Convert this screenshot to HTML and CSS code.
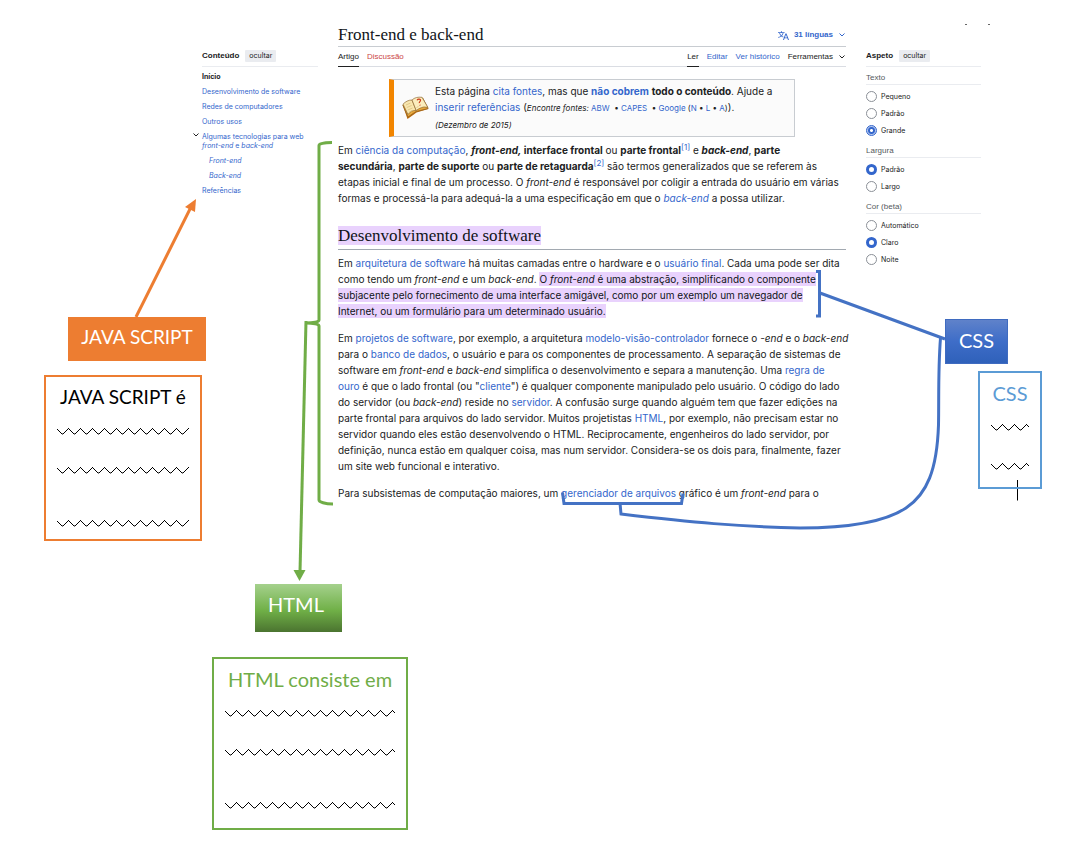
FILE: index.html
```html
<!DOCTYPE html>
<html lang="pt">
<head>
<meta charset="utf-8">
<title>Front-end e back-end</title>
<link rel="stylesheet" href="styles.css">
</head>
<body>
<div class="canvas">
  <div class="wiki">
    <nav class="toc" aria-label="Conteúdo">
      <div class="panel-head"><strong>Conteúdo</strong><button type="button">ocultar</button></div>
      <ul>
        <li><a class="current" href="#inicio">Início</a></li>
        <li><a href="#desenvolvimento">Desenvolvimento de software</a></li>
        <li><a href="#redes">Redes de computadores</a></li>
        <li><a href="#outros">Outros usos</a></li>
        <li class="expandable">
          <svg class="toggle" viewBox="0 0 8 6" aria-hidden="true"><path d="M1.5 1.5 4 4l2.500-2.500"/></svg>
          <a href="#tecnologias">Algumas tecnologias para web<br><i>front-end</i> e <i>back-end</i></a>
          <ul>
            <li><a href="#front"><i>Front-end</i></a></li>
            <li><a href="#back"><i>Back-end</i></a></li>
          </ul>
        </li>
        <li><a href="#ref">Referências</a></li>
      </ul>
    </nav>

    <main class="article" id="inicio">
      <header class="title-bar">
        <h1>Front-end e back-end</h1>
        <button class="languages" type="button">
          <svg class="lang-icon" viewBox="0 0 20 20" aria-hidden="true"><path d="M20 18h-1.440a.6.6 0 0 1-.4-.12.800.800 0 0 1-.23-.31L17 15h-5l-1 2.540a.8.8 0 0 1-.22.300.6.600 0 0 1-.4.140H9l4.550-11.470h1.890zm-3.530-4.310L14.890 9.500a12 12 0 0 1-.39-1.240q-.090.370-.19.690l-.190.560-1.580 4.190zm-6.300-1.580a13.400 13.400 0 0 1-2.910-1.410 11.460 11.460 0 0 0 2.810-5.370H12V4H7.310a4 4 0 0 0-.2-.560C6.870 2.790 6.600 2 6.600 2l-1.470.500s.4.890.6 1.500H0v1.330h2.150A11.230 11.230 0 0 0 5 10.700a17.200 17.200 0 0 1-5 2.100q.56.820.87 1.380a23.300 23.300 0 0 0 5.220-2.510 15.600 15.600 0 0 0 3.560 1.770zM3.630 5.330h4.910a8.100 8.100 0 0 1-2.450 4.450 9.100 9.100 0 0 1-2.460-4.450"/></svg>
          31 línguas
          <svg class="chevron" viewBox="0 0 8 6" aria-hidden="true"><path d="M1.500 1.500 4 4l2.500-2.500"/></svg>
        </button>
      </header>
      <div class="tabs">
        <nav class="tab-group" aria-label="Páginas">
          <a class="selected" href="#artigo">Artigo</a><a class="missing" href="#discussao">Discussão</a>
        </nav>
        <nav class="tab-group views" aria-label="Vistas">
          <a class="selected" href="#ler">Ler</a><a href="#editar">Editar</a><a href="#historico">Ver histórico</a>
          <button type="button">Ferramentas <svg class="chevron" viewBox="0 0 8 6" aria-hidden="true"><path d="M1.500 1.500 4 4l2.500-2.500"/></svg></button>
        </nav>
      </div>

      <aside class="notice">
        <svg class="book" viewBox="0 0 28 24" aria-hidden="true">
          <path d="M.8 9.500 5.500 23l7-5 2-1.500 11.700-3.500L20 2z" fill="#b8690c"/>
          <path d="M.8 9 6 21l6.500-4.500 1.700-1 12-3-5.500-10.500z" fill="#e8a83a" stroke="#96621f" stroke-width=".8"/>
          <path d="M1 8.200C3.500 5.500 6.500 4 10 4l4.200 10.500c-3.500-.3-6 1-8.200 4z" fill="#f8e6ae" stroke="#8f6a33" stroke-width=".7"/>
          <path d="M10 4c2.500-2.500 6-3.200 10-2.700l5.800 10c-4-.7-8 .3-11.600 3.200z" fill="#fbedbd" stroke="#8f6a33" stroke-width=".7"/>
          <path d="m4 9 4.500-2m-3.700 4.500 4.700-2m-3.700 4.500 4.700-2m-3.500 4.300 3.500-1.800M14.500 11.500l2-1m4 .3 2.500-.3" stroke="#d8bb78" stroke-width=".7"/>
          <path d="M15 4.200c1-1.700 3.700-1.400 3.500.3-.1 1.200-1.500 1.200-1.200 2.700m.6 1.500.3.700" fill="none" stroke="#cf3b1c" stroke-width="1.200"/>
        </svg>
        <div>
          Esta página <a href="#fontes">cita fontes</a>, mas que <a href="#cobrem"><b>não cobrem</b></a> <b>todo o conteúdo</b>. Ajude a<br>
          <a href="#inserir">inserir referências</a> (<small><i>Encontre fontes:</i> <a href="#abw">ABW</a> &nbsp;• <a href="#capes">CAPES</a> &nbsp;• <a href="#google">Google</a> (<a href="#n">N</a> • <a href="#l">L</a> • <a href="#a">A</a>)</small>).<br>
          <small><i>(Dezembro de 2015)</i></small>
        </div>
      </aside>

      <p>Em <a href="#cc">ciência da computação</a>, <b><i>front-end,</i> interface frontal</b> ou <b>parte frontal</b><sup><a href="#r1">[1]</a></sup> e <b><i>back-end</i></b>, <b>parte<br>
        secundária</b>, <b>parte de suporte</b> ou <b>parte de retaguarda</b><sup><a href="#r2">[2]</a></sup> são termos generalizados que se referem às<br>
        etapas inicial e final de um processo. O <i>front-end</i> é responsável por coligir a entrada do usuário em várias<br>
        formas e processá-la para adequá-la a uma especificação em que o <a href="#be"><i>back-end</i></a> a possa utilizar.</p>

      <h2 id="desenvolvimento"><mark>Desenvolvimento de software</mark></h2>

      <p>Em <a href="#arq">arquitetura de software</a> há muitas camadas entre o hardware e o <a href="#uf">usuário final</a>. Cada uma pode ser dita<br>
        como tendo um <i>front-end</i> e um <i>back-end</i>. <mark>O <i>front-end</i> é uma abstração, simplificando o componente<br>
        subjacente pelo fornecimento de uma interface amigável, como por um exemplo um navegador de<br>
        Internet, ou um formulário para um determinado usuário.</mark></p>

      <p>Em <a href="#proj">projetos de software</a>, por exemplo, a arquitetura <a href="#mvc">modelo-visão-controlador</a> fornece o <i>-end</i> e o <i>back-end</i><br>
        para o <a href="#bd">banco de dados</a>, o usuário e para os componentes de processamento. A separação de sistemas de<br>
        software em <i>front-end</i> e <i>back-end</i> simplifica o desenvolvimento e separa a manutenção. Uma <a href="#regra">regra de<br>
        ouro</a> é que o lado frontal (ou "<a href="#cliente">cliente</a>") é qualquer componente manipulado pelo usuário. O código do lado<br>
        do servidor (ou <i>back-end</i>) reside no <a href="#servidor">servidor</a>. A confusão surge quando alguém tem que fazer edições na<br>
        parte frontal para arquivos do lado servidor. Muitos projetistas <a href="#html">HTML</a>, por exemplo, não precisam estar no<br>
        servidor quando eles estão desenvolvendo o HTML. Reciprocamente, engenheiros do lado servidor, por<br>
        definição, nunca estão em qualquer coisa, mas num servidor. Considera-se os dois para, finalmente, fazer<br>
        um site web funcional e interativo.</p>

      <p>Para subsistemas de computação maiores, um <a href="#ga">gerenciador de arquivos</a> gráfico é um <i>front-end</i> para o</p>
    </main>

    <aside class="appearance">
      <div class="panel-head"><strong>Aspeto</strong><button type="button">ocultar</button></div>
      <fieldset>
        <legend>Texto</legend>
        <label><input type="radio" name="texto">Pequeno</label>
        <label><input type="radio" name="texto">Padrão</label>
        <label><input class="focused" type="radio" name="texto" checked>Grande</label>
      </fieldset>
      <fieldset>
        <legend>Largura</legend>
        <label><input type="radio" name="largura" checked>Padrão</label>
        <label><input type="radio" name="largura">Largo</label>
      </fieldset>
      <fieldset>
        <legend>Cor (beta)</legend>
        <label><input type="radio" name="cor">Automático</label>
        <label><input type="radio" name="cor" checked>Claro</label>
        <label><input type="radio" name="cor">Noite</label>
      </fieldset>
    </aside>
  </div>

  <svg class="connectors" viewBox="0 0 1074 842" aria-hidden="true">
    <defs>
      <pattern id="zigzag" width="12" height="8" patternUnits="userSpaceOnUse">
        <path d="M-1 1 5 7h1l6-6h1" fill="none" stroke="#000" stroke-width="1"/>
      </pattern>
    </defs>
    <g fill="none" stroke="#ed7d31" stroke-width="3"><path d="M136 317 191 207"/></g>
    <path d="m196 199-1 13-10-5z" fill="#ed7d31"/>
    <g fill="none" stroke="#70ad47" stroke-width="3">
      <path d="M332 142.500c-8 0-13 1-13 3V320c0 2-6 3-13 3 7 0 13 1 13 3v174c0 2 6 4 14 4"/>
      <path d="M306 321 300 572"/>
    </g>
    <path d="m299.500 581-6-11h12z" fill="#70ad47"/>
    <g fill="none" stroke="#4472c4" stroke-width="3">
      <path d="M816 271.500h3.500v44.500H816M820 293l125 46"/>
      <path d="M562.500 492.500 564 503.500h117.500l1.500-10M620 503l1 11C690 522 740 527 800 528C850 528 885 522 906 508C927 494 937 470 938.500 425C939 400 938 370 940.500 338"/>
    </g>
    <path d="M1017.500 480v20.500" stroke="#000" stroke-width="1"/>
    <path d="M965 24.500h2M988 24.500h2" stroke="#666" stroke-width="1"/>
  </svg>

  <div class="tag tag-js">JAVA SCRIPT</div>
  <section class="card card-js">
    <h3>JAVA SCRIPT é</h3>
    <svg class="wave" aria-hidden="true"><rect width="100%" height="8" fill="url(#zigzag)"/></svg>
    <svg class="wave" aria-hidden="true"><rect width="100%" height="8" fill="url(#zigzag)"/></svg>
    <svg class="wave last" aria-hidden="true"><rect width="100%" height="8" fill="url(#zigzag)"/></svg>
  </section>

  <div class="tag tag-html">HTML</div>
  <section class="card card-html">
    <h3>HTML consiste em</h3>
    <svg class="wave" aria-hidden="true"><rect width="100%" height="8" fill="url(#zigzag)"/></svg>
    <svg class="wave" aria-hidden="true"><rect width="100%" height="8" fill="url(#zigzag)"/></svg>
    <svg class="wave last" aria-hidden="true"><rect width="100%" height="8" fill="url(#zigzag)"/></svg>
  </section>

  <div class="tag tag-css">CSS</div>
  <section class="card card-css">
    <h3>CSS</h3>
    <svg class="wave" aria-hidden="true"><rect width="100%" height="8" fill="url(#zigzag)"/></svg>
    <svg class="wave" aria-hidden="true"><rect width="100%" height="8" fill="url(#zigzag)"/></svg>
  </section>
</div>
</body>
</html>
```
FILE: styles.css
```css
* { box-sizing: border-box; }

body {
  margin: 0;
  background: #fff;
  color: #202122;
  font-family: Inter, "Liberation Sans", Arial, sans-serif;
  font-size: 10px;
  line-height: 16px;
}

a { color: #3366cc; text-decoration: none; }
button { border: 0; padding: 0; background: none; font: inherit; color: inherit; }
ul { list-style: none; margin: 0; padding: 0; }
p { margin: 0 0 11px; white-space: nowrap; }
mark { padding: 1px 0; background: #e9d2fd; color: #101418; }
small { font-size: 8px; }
sup { font-size: 8px; line-height: 0; vertical-align: 4px; }

.canvas { position: relative; min-height: 842px; }

.wiki {
  display: grid;
  grid-template-columns: 116px minmax(0, 1fr) 115px;
  gap: 20px;
  padding: 24px 93px 0 202px;
}

/* side panels */
.toc, .appearance { padding-top: 22px; font-size: 7px; line-height: 9px; }
.panel-head {
  display: flex;
  align-items: center;
  gap: 6px;
  height: 21px;
  padding-bottom: 1px;
  border-bottom: 1px solid #eaecf0;
}
.panel-head strong { font-family: "Liberation Sans", Arial, sans-serif; font-size: 8px; }
.panel-head button {
  padding: 1px 4px;
  border-radius: 1px;
  background: #eaecf0;
  line-height: 10px;
}
.toc > ul { padding-top: 5px; }
.toc li { margin-bottom: 6px; white-space: nowrap; }
.toc li ul { padding: 6px 0 0 7px; }
.toc .current { color: #202122; font-weight: bold; }
.expandable { position: relative; }
.toggle { position: absolute; left: -10px; top: 0; width: 8px; height: 6px; fill: none; stroke: #202122; }

/* article */
.title-bar {
  display: flex;
  justify-content: space-between;
  align-items: center;
  height: 23px;
  border-bottom: 1px solid #c8ccd1;
}
h1, h2 { margin: 0; font-family: "Liberation Serif", Georgia, serif; font-weight: normal; color: #101418; }
h1 { font-size: 17px; line-height: 22px; }
h2 { margin: 20px 0 5px; padding-bottom: 3px; border-bottom: 1px solid #a2a9b1; font-size: 17px; line-height: 20px; }
h2 mark { padding: 0; }
.languages, .tabs { font-family: "Liberation Sans", Arial, sans-serif; font-size: 8px; }
.languages { display: flex; align-items: center; gap: 5px; color: #3366cc; font-weight: bold; line-height: 10px; }
.lang-icon { width: 11px; height: 11px; fill: #3366cc; }
.chevron { width: 8px; height: 6px; fill: none; stroke: currentColor; }
.tabs {
  display: flex;
  justify-content: space-between;
  height: 20px;
  margin-bottom: 12px;
  border-bottom: 1px solid #dadde3;
  line-height: 20px;
}
.tab-group { display: flex; gap: 8px; }
.tab-group a, .tab-group button { height: 20px; }
.tab-group button { display: flex; align-items: center; gap: 5px; }
.tab-group .selected { color: #202122; border-bottom: 1px solid #202122; }
.tab-group .missing { color: #cc4747; }

.notice {
  display: flex;
  align-items: center;
  gap: 5px;
  margin: 0 51px 5px;
  padding: 3px 8px;
  border: 1px solid #c8ccd1;
  border-left: 5px solid #f28500;
  background: #fbfbfb;
  white-space: nowrap;
}
.book { flex: none; width: 28px; height: 24px; }

/* appearance panel */
fieldset { margin: 0 0 7px; padding: 0; border: 0; }
.panel-head + fieldset { margin-top: 6px; }
legend { width: 100%; margin-bottom: 3px; padding: 0 0 2px; border-bottom: 1px solid #eaecf0; color: #54595d; font-family: "Liberation Sans", Arial, sans-serif; font-size: 8px; }
label { display: flex; align-items: center; gap: 4px; height: 17px; }
input[type="radio"] {
  appearance: none;
  flex: none;
  width: 11px;
  height: 11px;
  margin: 0;
  border: 1px solid #8b9097;
  border-radius: 50%;
  background: #fff;
}
input[type="radio"]:checked { border: 3px solid #3366cc; }
input.focused:checked { border: 1px solid #3366cc; background: radial-gradient(circle, #fff 0 1px, #3366cc 2px 3px, #b4c6ee 4px); }

/* diagram */
.connectors { position: absolute; left: 0; top: 0; width: 1074px; height: 842px; pointer-events: none; }
.tag, .card { position: absolute; font-family: Lato, Calibri, sans-serif; font-size: 20px; line-height: 24px; text-align: center; white-space: nowrap; }
.tag { color: #fff; padding: 8px 13px; }
.tag-js { left: 68px; top: 317px; width: 138px; height: 44px; background: #ed7d31; font-size: 19px; }
.tag-html { left: 255px; top: 584px; width: 87px; height: 48px; padding-right: 19px; background: linear-gradient(#a5d18d, #70b047 55%, #4b7430); }
.tag-css { left: 945px; top: 319px; width: 63px; height: 45px; background: linear-gradient(#5f82ca, #3e6dc8 50%, #2f61ba); border: 1px solid #3f6bc0; }
.card { padding: 8px 11px; border: 2px solid; }
.card h3 { margin: 0 0 18px; font-size: inherit; font-weight: normal; }
.card-js { left: 44px; top: 375px; width: 158px; height: 166px; border-color: #ed7d31; color: #000; font-size: 19px; }
.card-html { left: 212px; top: 657px; width: 196px; height: 173px; border-color: #70ad47; color: #70ad47; }
.card-css { left: 978px; top: 371px; width: 64px; height: 118px; border-color: #5b9bd5; color: #5b9bd5; }
.wave { display: block; width: 100%; height: 8px; margin-bottom: 31px; }
.wave.last { margin-top: 45px; margin-bottom: 0; }
```
